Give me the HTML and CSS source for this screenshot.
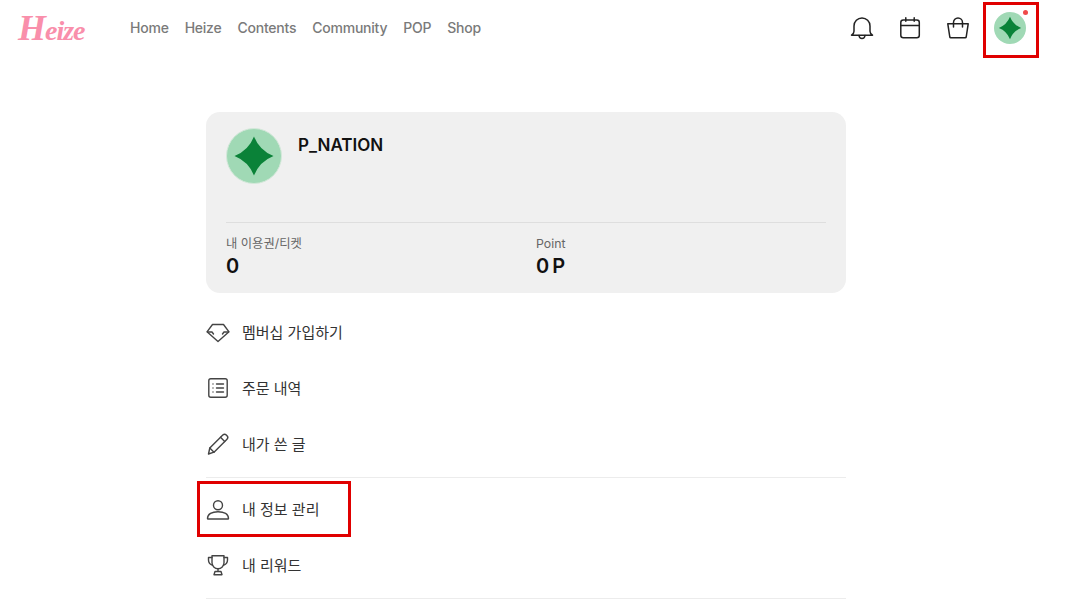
FILE: index.html
```html
<!DOCTYPE html>
<html lang="ko">
<head>
    <meta charset="UTF-8">
    <title>Heize | 내 정보</title>
    <link rel="stylesheet" href="styles.css">
</head>
<body>
    <header class="topbar">
        <a class="logo" href="#">Heize</a>
        <nav class="main-nav">
            <a href="#">Home</a>
            <a href="#">Heize</a>
            <a href="#">Contents</a>
            <a href="#">Community</a>
            <a href="#">POP</a>
            <a href="#">Shop</a>
        </nav>
        <div class="top-icons">
            <a class="top-icon" href="#">
                <svg width="24" height="24" viewBox="0 0 24 24" fill="none" stroke="#222" stroke-width="1.5" stroke-linecap="round" stroke-linejoin="round">
                    <path d="M1.500 19.200h21c-1.600-1-2.500-2.200-2.500-4V10a8 8 0 0 0-16 0v5.200c0 1.800-.9 3-2.500 4Z"/>
                    <path d="M9 19.500c.2 1.900 1.400 3 3 3s2.800-1.100 3-3"/>
                </svg>
            </a>
            <a class="top-icon" href="#">
                <svg width="24" height="24" viewBox="0 0 24 24" fill="none" stroke="#222" stroke-width="1.500" stroke-linecap="round" stroke-linejoin="round">
                    <rect x="2.800" y="4" width="18.500" height="17.800" rx="2.500"/>
                    <path d="M2.800 9.500h18.500M7.800 1.800v3.500M16.200 1.800v3.500"/>
                </svg>
            </a>
            <a class="top-icon" href="#">
                <svg width="24" height="24" viewBox="0 0 24 24" fill="none" stroke="#222" stroke-width="1.500" stroke-linecap="round" stroke-linejoin="round">
                    <path d="M1.800 7.800h20.400l-2 13.200a1 1 0 0 1-1 .8H4.800a1 1 0 0 1-1-.8Z"/>
                    <path d="M7.500 11V6.500a4.500 4.500 0 0 1 9 0V11"/>
                </svg>
            </a>
            <a class="avatar-btn" href="#">
                <svg class="avatar" width="32" height="32" viewBox="0 0 56 56">
                    <circle cx="28" cy="28" r="28" fill="#a0d9b5"/>
                    <path d="M28 8.500Q33.500 22.500 47.500 28 33.500 33.500 28 47.500 22.500 33.500 8.500 28 22.500 22.500 28 8.500Z" fill="#0a8238"/>
                </svg>
                <span class="dot"></span>
            </a>
        </div>
    </header>

    <main class="page">
        <section class="profile-card">
            <div class="profile-top">
                <svg width="56" height="56" viewBox="0 0 56 56">
                    <circle cx="28" cy="28" r="27.500" fill="#a0d9b5" stroke="#d4e8da"/>
                    <path d="M28 8.500Q33.500 22.500 47.500 28 33.500 33.500 28 47.500 22.500 33.500 8.500 28 22.500 22.500 28 8.500Z" fill="#0a8238"/>
                </svg>
                <div class="profile-name">P_NATION</div>
            </div>
            <div class="profile-stats">
                <div class="stat">
                    <div class="stat-label">내 이용권/티켓</div>
                    <div class="stat-value">0</div>
                </div>
                <div class="stat">
                    <div class="stat-label">Point</div>
                    <div class="stat-value">0 P</div>
                </div>
            </div>
        </section>

        <ul class="menu">
            <li><a href="#">
                <svg width="24" height="24" viewBox="0 0 24 24" fill="none" stroke="#444" stroke-width="1.400" stroke-linejoin="round" stroke-linecap="round">
                    <path d="M6.500 4.500h11L23 11.800 12 21.500 1 11.800Z"/>
                    <path d="M1.500 12H6l1.500 2M22.500 12H18l-1.500 2"/>
                </svg>
                멤버십 가입하기</a></li>
            <li><a href="#">
                <svg width="24" height="24" viewBox="0 0 24 24" fill="none" stroke="#444" stroke-width="1.400" stroke-linecap="round">
                    <rect x="2.800" y="2.800" width="18.400" height="18.400" rx="2"/>
                    <path d="M10.500 8h7M10.500 12h7M10.500 16h7M7 8h.01M7 12h.01M7 16h.01"/>
                </svg>
                주문 내역</a></li>
            <li><a href="#">
                <svg width="24" height="24" viewBox="0 0 24 24" fill="none" stroke="#444" stroke-width="1.400" stroke-linejoin="round" stroke-linecap="round">
                    <path d="M2.500 22l1.300-6L16.800 3a2.500 2.500 0 0 1 3.500 0l.7.700a2.500 2.500 0 0 1 0 3.500L8 20.200Z"/>
                    <path d="M3.800 16l4.200 4.200M14.500 5.300l4.200 4.200"/>
                </svg>
                내가 쓴 글</a></li>
        </ul>
        <ul class="menu menu-second">
            <li class="marked"><a href="#">
                <svg width="24" height="24" viewBox="0 0 24 24" fill="none" stroke="#444" stroke-width="1.400" stroke-linejoin="round">
                    <circle cx="12" cy="8.300" r="4.500"/>
                    <path d="M1.500 21.500c0-4.500 4.500-6.800 10.500-6.800s10.500 2.300 10.500 6.800c0 .4-.3.500-.6.500H2.100c-.3 0-.6-.1-.6-.5Z"/>
                </svg>
                내 정보 관리</a></li>
            <li><a href="#">
                <svg width="24" height="24" viewBox="0 0 24 24" fill="none" stroke="#444" stroke-width="1.400" stroke-linejoin="round" stroke-linecap="round">
                    <path d="M6 2.800h12v7a6 6 0 0 1-12 0Z"/>
                    <path d="M6 4.500H2.500v2.500c0 2.500 1.500 4.500 4.200 5.200M18 4.500h3.500v2.500c0 2.500-1.500 4.500-4.200 5.200"/>
                    <path d="M12 15.800v2.700M9 18.500h6l1 3.200H8Z"/>
                </svg>
                내 리워드</a></li>
        </ul>
    </main>
</body>
</html>
```

FILE: styles.css
```css
* {
    box-sizing: border-box;
}

body {
    margin: 0;
    padding-right: 16px;
    font-family: Inter, "Noto Sans CJK KR", sans-serif;
    color: #222;
    background: #fff;
}

a {
    color: inherit;
    text-decoration: none;
}

.topbar {
    display: flex;
    align-items: center;
    height: 56px;
    padding: 0 13px 0 18px;
}

.logo {
    display: block;
    width: 112px;
    font-family: "Liberation Serif", serif;
    font-size: 28px;
    font-style: italic;
    font-weight: 700;
    letter-spacing: -1px;
    color: #f98fab;
}

.logo::first-letter {
    font-size: 36px;
}

.main-nav {
    display: flex;
    gap: 16px;
    margin-bottom: 1px;
    font-size: 14px;
    font-weight: 500;
    letter-spacing: -0.23px;
    color: #7a7a7a;
}

.top-icons {
    display: flex;
    align-items: center;
    gap: 24px;
    margin-left: auto;
}

.top-icon {
    display: flex;
}

.avatar-btn {
    position: relative;
    display: flex;
    align-items: center;
    justify-content: center;
    width: 56px;
    height: 56px;
    margin-left: -11px;
    margin-top: 4px;
    padding: 0 2px 4px 0;
    border: 3px solid #e00000;
}

.dot {
    position: absolute;
    top: 5px;
    right: 8px;
    width: 5px;
    height: 5px;
    border-radius: 50%;
    background: #f04a4a;
}

.page {
    width: 640px;
    margin: 56px auto 0;
}

.profile-card {
    height: 181px;
    padding: 16px 20px;
    border-radius: 14px;
    background: #f0f0f0;
}

.profile-top {
    display: flex;
    gap: 16px;
    height: 95px;
    border-bottom: 1px solid #dedede;
}

.profile-name {
    margin-top: 4px;
    font-size: 17px;
    line-height: 26px;
    font-weight: 600;
    color: #111;
}

.profile-stats {
    display: flex;
    padding-top: 12px;
}

.stat {
    flex: 0 0 310px;
}

.stat-label {
    font-size: 12.300px;
    line-height: 18px;
    color: #666;
}

.stat-value {
    font-size: 20px;
    line-height: 26px;
    font-weight: 600;
    color: #111;
    word-spacing: -2px;
}

.menu {
    margin: 11px 0 0;
    padding: 0 0 5px;
    list-style: none;
    border-bottom: 1px solid #ececec;
}

.menu-second {
    margin-top: 0;
    padding-top: 3px;
}

.menu li a {
    display: flex;
    align-items: center;
    gap: 12px;
    height: 56px;
    padding-bottom: 1px;
    font-size: 15px;
    color: #333;
}

.marked {
    width: 154px;
    margin-left: -9px;
    outline: 3px solid #e00000;
    outline-offset: -3px;
}

.menu .marked a {
    padding-left: 9px;
}
```
